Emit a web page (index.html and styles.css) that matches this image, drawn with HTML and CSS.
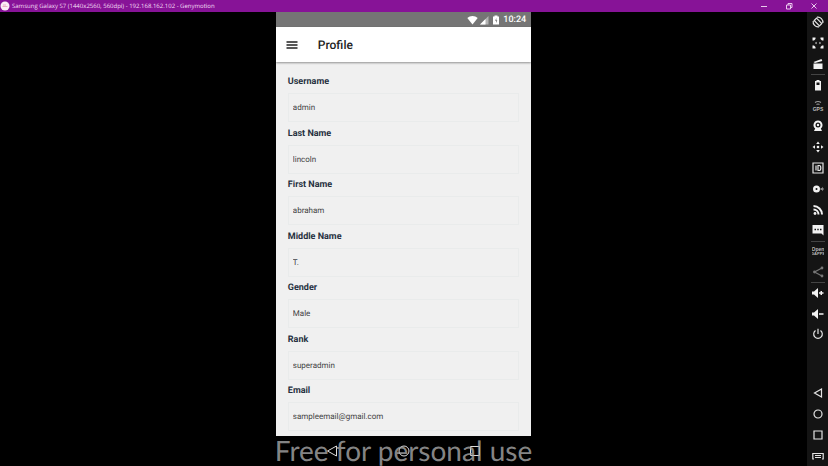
FILE: index.html
```html
<!DOCTYPE html>
<html lang="en">
<head>
    <meta charset="utf-8"/>
    <title>Profile</title>
    <meta name="viewport" content="width=device-width, initial-scale=1"/>
    <link rel="stylesheet" href="styles.css">
</head>
<body>
    <header class="titlebar">
        <svg class="logo" viewBox="0 0 10 10"><circle cx="5" cy="5" r="4.500" fill="#fbeef6"/><path d="M2.500 5.500h5M3 4h3" stroke="#e8b0c4" fill="none"/></svg>
        <span class="caption">Samsung Galaxy S7 (1440x2560, 560dpi) - 192.168.162.102 - Genymotion</span>
        <button class="win" aria-label="Minimize"><svg viewBox="0 0 8 8"><path d="M1 4.500h6"/></svg></button>
        <button class="win" aria-label="Restore"><svg viewBox="0 0 8 8"><path d="M1.500 3h4v4h-4zM3 3V1.500h4v4H5.500"/></svg></button>
        <button class="win" aria-label="Close"><svg viewBox="0 0 8 8"><path d="M1.500 1.500l5 5M6.500 1.500l-5 5"/></svg></button>
    </header>
    <div class="workspace">
        <div class="stage">
            <main class="phone">
                <div class="status">
                    <svg class="wifi" viewBox="0 0 11 10"><path d="M5.500 9.500L.3 3C3 .3 8 .3 10.700 3z" fill="#fff"/></svg>
                    <svg class="signal" viewBox="0 0 10 10"><path d="M9.500 1v8.500H1z" fill="#b4b4b4"/><path d="M6.500 4v5.500H1z" fill="#fff"/></svg>
                    <svg class="battery" viewBox="0 0 8 10"><path d="M1 1.500h1.500V.5h3v1H7v8H1z" fill="#fff"/><path d="M4.500 3L3 5.800h1V8l1.300-2.800H4.300z" fill="#757575"/></svg>
                    <span>10:24</span>
                </div>
                <div class="appbar">
                    <button class="menu" aria-label="Menu"><svg viewBox="0 0 12 10"><path d="M.5 2h11M.5 5h11M.5 8h11"/></svg></button>
                    <h1>Profile</h1>
                </div>
                <form class="profile">
                    <div class="field">
                        <label for="username">Username</label>
                        <input type="text" id="username" value="admin">
                    </div>
                    <div class="field">
                        <label for="last">Last Name</label>
                        <input type="text" id="last" value="lincoln">
                    </div>
                    <div class="field">
                        <label for="first">First Name</label>
                        <input type="text" id="first" value="abraham">
                    </div>
                    <div class="field">
                        <label for="middle">Middle Name</label>
                        <input type="text" id="middle" value="T.">
                    </div>
                    <div class="field">
                        <label for="gender">Gender</label>
                        <input type="text" id="gender" value="Male">
                    </div>
                    <div class="field">
                        <label for="rank">Rank</label>
                        <input type="text" id="rank" value="superadmin">
                    </div>
                    <div class="field">
                        <label for="email">Email</label>
                        <input type="text" id="email" value="sampleemail@gmail.com">
                    </div>
                </form>
                <nav class="keys">
                    <button aria-label="Back"><svg viewBox="0 0 12 12"><path d="M10.500 1v10L1.500 6z"/></svg></button>
                    <button aria-label="Home"><svg viewBox="0 0 12 12"><circle cx="6" cy="6" r="5"/></svg></button>
                    <button aria-label="Recent apps"><svg viewBox="0 0 12 12"><path d="M1.500 1.500h9v9h-9z"/></svg></button>
                    <span class="watermark">Free for personal use</span>
                </nav>
            </main>
        </div>
        <aside class="tools">
            <button aria-label="Rotate"><svg viewBox="0 0 12 12"><g class="line"><path d="M4.500 2.200L9.800 7.500 7.500 9.800 2.200 4.500z"/><path d="M5 1.200a5 5 0 0 1 5.800 5.800M7 10.800A5 5 0 0 1 1.200 5"/></g></svg></button>
            <button aria-label="Fullscreen"><svg viewBox="0 0 12 12"><path d="M.5.500h3v1.500L2 3.500H.5zM11.500.5v3H10L8.500 2V.5zM.5 11.500v-3H2L3.500 10v1.500zM11.500 11.500h-3V10L10 8.500h1.500zM3 6l1.500-1.200v2.400zM9 6L7.500 4.800v2.400z"/></svg></button>
            <button aria-label="Capture"><svg viewBox="0 0 12 12"><path d="M1.500 5.500h9V11h-9zM1.500 4L9.500 1l.8 2L3 5z"/></svg></button>
            <button class="split" aria-label="Battery"><svg viewBox="0 0 12 12"><path fill-rule="evenodd" d="M4.500 1h3v1H9v9.500H3V2h1.500zM4.500 3.500V6h3V3.500z"/></svg></button>
            <button class="dim" aria-label="GPS"><svg viewBox="0 0 12 12"><g class="line"><path d="M3 2.500q3-2 6 0M4.500 4.500q1.500-1 3 0"/></g><text x="6" y="10.500">GPS</text></svg></button>
            <button aria-label="Camera"><svg viewBox="0 0 12 12"><path fill-rule="evenodd" d="M6 .5a4.500 4.500 0 0 1 2.800 8L10 11H2l1.200-2.500A4.500 4.500 0 0 1 6 .5zM6 2.500a2.500 2.500 0 1 0 0 5 2.500 2.500 0 0 0 0-5z"/><circle cx="6" cy="5" r="1.200"/></svg></button>
            <button aria-label="Remote control"><svg viewBox="0 0 12 12"><path d="M6 .5l1.800 2.500H4.200zM6 11.500L4.200 9h3.600zM.5 6L3 4.200v3.600zM11.500 6L9 7.800V4.200z"/><circle cx="6" cy="6" r="1.300"/></svg></button>
            <button aria-label="Identifiers"><svg viewBox="0 0 12 12"><g class="line"><path d="M1 1h10v10H1zM4 3.500v5M6 3.500v5h1.200q1.600 0 1.600-2.500T7.200 3.500z"/></g></svg></button>
            <button aria-label="Disk I/O"><svg viewBox="0 0 12 12"><path fill-rule="evenodd" d="M4.500 2.500a3.500 3.500 0 1 1 0 7 3.500 3.500 0 0 1 0-7zM4.500 5a1 1 0 1 0 0 2 1 1 0 0 0 0-2z"/><path class="faint" d="M8.500 5H10V3.800l2 2.200-2 2.200V7H8.500z"/></svg></button>
            <button aria-label="Network"><svg viewBox="0 0 12 12"><circle cx="3" cy="9.500" r="1.400"/><g class="thick"><path d="M1.500 5.500a5 5 0 0 1 5 5M1.500 2a8.500 8.500 0 0 1 8.500 8.500"/></g></svg></button>
            <button aria-label="Phone"><svg viewBox="0 0 12 12"><path fill-rule="evenodd" d="M.5 1h11v10.500l-2-2h-9zM2.500 4.800v1.400H4V4.800zM5.300 4.800v1.400h1.400V4.800zM8 4.800v1.400h1.500V4.800z"/></svg></button>
            <button class="split dim" aria-label="Open GApps"><svg viewBox="0 0 12 12"><text x="6" y="5.500">Open</text><text x="6" y="10" class="tiny">GAPPS</text></svg></button>
            <button class="off" aria-label="Share"><svg viewBox="0 0 12 12"><g class="line"><path d="M10 2L2.500 6 10 10"/></g><circle cx="10" cy="2" r="1.400"/><circle cx="2.500" cy="6" r="1.400"/><circle cx="10" cy="10" r="1.400"/></svg></button>
            <button class="split" aria-label="Volume up"><svg viewBox="0 0 12 12"><path d="M0 4.500h2L6 1v10L2 7.500H0zM8.500 4H10v1.300h1.500v1.500H10V8H8.500V6.800H7V5.300h1.500z"/></svg></button>
            <button aria-label="Volume down"><svg viewBox="0 0 12 12"><path d="M0 4.500h2L6 1v10L2 7.500H0zM7 5.300h4.500v1.500H7z"/></svg></button>
            <button aria-label="Power"><svg viewBox="0 0 12 12"><g class="line"><path d="M6 .8V6M3.500 2.500a4.300 4.300 0 1 0 5 0"/></g></svg></button>
            <div class="space"></div>
            <button aria-label="Back"><svg viewBox="0 0 12 12"><g class="line"><path d="M9.500 2v8L2.500 6z"/></g></svg></button>
            <button aria-label="Home"><svg viewBox="0 0 12 12"><g class="line"><circle cx="6" cy="6" r="4"/></g></svg></button>
            <button aria-label="Recent apps"><svg viewBox="0 0 12 12"><g class="line"><path d="M2 2h8v8H2z"/></g></svg></button>
            <button aria-label="Menu"><svg viewBox="0 0 12 12"><g class="line"><path d="M2 9H.8V3.500h10.400V9H10M3 5.500h6M3 7.500h6"/></g></svg></button>
        </aside>
    </div>
</body>
</html>
```
FILE: styles.css
```css
html, body {
    height: 100%;
    margin: 0;
}
body {
    display: flex;
    flex-direction: column;
    overflow: hidden;
    background-color: #000;
    font-family: "Roboto", "Liberation Sans", sans-serif;
    text-rendering: geometricPrecision;
}
button {
    display: flex;
    align-items: center;
    justify-content: center;
    margin: 0;
    padding: 0;
    border: none;
    background: none;
}
.titlebar {
    display: flex;
    align-items: center;
    height: 12px;
    padding-right: 2px;
    background-color: #871397;
    color: #f3dff5;
}
.logo {
    width: 10px;
    height: 10px;
}
.caption {
    flex: 1;
    margin-left: 2px;
    font-family: "Open Sans", sans-serif;
    font-size: 6px;
    line-height: 12px;
    white-space: nowrap;
}
.win {
    width: 25px;
    height: 12px;
}
.win svg {
    width: 8px;
    height: 8px;
    fill: none;
    stroke: #e9c8ed;
}
.workspace {
    flex: 1;
    display: flex;
    min-height: 0;
}
.stage {
    flex: 1;
    display: flex;
    justify-content: center;
}
.phone {
    display: flex;
    flex-direction: column;
    height: 100%;
    aspect-ratio: 9 / 16;
    background-color: #f0f0f0;
}
.status {
    box-sizing: border-box;
    display: flex;
    align-items: center;
    justify-content: flex-end;
    height: 15px;
    padding: 1px 5px 0 0;
    background-color: #757575;
    color: #fff;
    font-size: 9px;
    font-weight: 500;
}
.status svg {
    height: 10px;
}
.signal {
    margin-left: 1px;
}
.status .battery {
    margin: 0 3px;
}
.appbar {
    display: flex;
    align-items: center;
    height: 35px;
    padding-left: 10px;
    background-color: #fff;
    box-shadow: 0 1px 2px rgba(0, 0, 0, .4);
}
.menu svg {
    width: 12px;
    height: 10px;
    stroke: #222;
    stroke-width: 1.5;
}
h1 {
    margin: 0 0 0 20px;
    color: #222;
    font-size: 12px;
    font-weight: 500;
}
.profile {
    flex: 1;
    display: flex;
    flex-direction: column;
    padding: 13px 12px 0;
}
.field {
    flex: 1;
    display: flex;
    flex-direction: column;
    gap: 4px;
}
label {
    color: #263040;
    font-size: 9px;
    font-weight: bold;
    line-height: 14px;
}
input {
    box-sizing: border-box;
    width: 100%;
    height: 29px;
    padding: 0 4px;
    border: 1px solid #e9ebeb;
    background: none;
    color: #444;
    font-family: inherit;
    font-size: 8px;
    text-rendering: inherit;
}
.keys {
    position: relative;
    display: flex;
    justify-content: space-between;
    height: 30px;
    padding: 0 50px;
    background-color: #000;
}
.keys svg {
    width: 12px;
    height: 12px;
    fill: none;
    stroke: #ddd;
}
/* licence notice, lies over the navigation keys */
.watermark {
    position: absolute;
    left: 0;
    right: 0;
    bottom: 0;
    display: flex;
    justify-content: center;
    color: rgba(170, 170, 170, .8);
    font-family: "Lato", sans-serif;
    font-size: 28px;
    line-height: 32px;
    white-space: nowrap;
    pointer-events: none;
}
.tools {
    display: flex;
    flex-direction: column;
    width: 21px;
    background-color: #141414;
}
.tools button {
    flex: 1;
    box-sizing: border-box;
    min-height: 0;
}
.tools .split {
    background: linear-gradient(#444, #444) center top / 14px 1px no-repeat;
}
.tools svg {
    width: 12px;
    height: 12px;
    fill: #f2f2f2;
}
.tools .line {
    fill: none;
    stroke: #e4e4e4;
    stroke-width: 1.2;
}
.tools .thick {
    fill: none;
    stroke: #f2f2f2;
    stroke-width: 2;
}
.tools .faint {
    fill: #888;
}
.tools .dim svg {
    fill: #bbb;
}
.tools .dim .line {
    stroke: #999;
}
.tools .off svg {
    fill: #777;
}
.tools .off .line {
    stroke: #777;
}
.tools text {
    font-size: 5px;
    font-weight: bold;
    text-anchor: middle;
}
.tools .tiny {
    font-size: 4px;
}
.space {
    height: 38px;
}
```
